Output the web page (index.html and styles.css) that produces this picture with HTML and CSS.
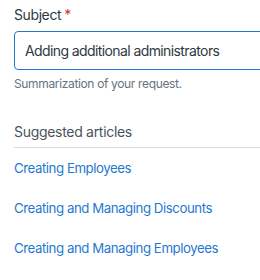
FILE: index.html
```html
<!DOCTYPE html>
<html lang="en">
<head>
  <meta charset="UTF-8">
  <title>Request form</title>
  <link rel="stylesheet" href="styles.css">
</head>
<body>
  <div class="form">
    <!-- Subject field -->
    <div class="field">
      <label class="field-label" for="subject">Subject<span class="required">*</span></label>
      <input id="subject" class="field-input" type="text" value="Adding additional administrators">
      <p class="field-hint">Summarization of your request.</p>
    </div>

    <!-- Suggested articles -->
    <div class="suggestions">
      <h2 class="suggestions-title">Suggested articles</h2>
      <ul class="suggestions-list">
        <li><a href="#">Creating Employees</a></li>
        <li><a href="#">Creating and Managing Discounts</a></li>
        <li><a href="#">Creating and Managing Employees</a></li>
        <li><a href="#">Creating and Managing Products</a></li>
      </ul>
    </div>
  </div>
</body>
</html>
```

FILE: styles.css
```css
* {
  margin: 0;
  padding: 0;
  box-sizing: border-box;
}
body {
  font-family: Inter, "Noto Sans", sans-serif;
  color: #2f3941;
  background: #fff;
  overflow: hidden;
}
.form {
  padding: 5px 0 0 14px;
  width: 300px;
}

/* Subject field */
.field-label {
  display: block;
  font-size: 14px;
  line-height: 20px;
  letter-spacing: -0.4px;
  color: #2f3941;
  margin-bottom: 6px;
}
.required {
  color: #cc3340;
  margin-left: 3px;
}
.field-input {
  display: block;
  width: 100%;
  height: 39px;
  padding: 0 10px;
  border: 1px solid #1f78d1;
  border-radius: 4px;
  font-family: inherit;
  font-size: 14px;
  letter-spacing: -0.6px;
  color: #2f3941;
  outline: none;
}
.field-hint {
  margin-top: 6px;
  font-size: 12px;
  line-height: 16px;
  letter-spacing: -0.35px;
  color: #68737d;
}

/* Suggested articles */
.suggestions {
  margin-top: 30px;
}
.suggestions-title {
  font-size: 14px;
  font-weight: normal;
  line-height: 20px;
  letter-spacing: -0.3px;
  color: #49545c;
  padding-bottom: 5px;
  border-bottom: 1px solid #d8dcde;
}
.suggestions-list {
  list-style: none;
}
.suggestions-list li {
  padding-top: 9px;
  padding-bottom: 10px;
}
.suggestions-list a {
  font-size: 13.25px;
  line-height: 20px;
  letter-spacing: -0.45px;
  color: #1f78d1;
  text-decoration: none;
}
```
